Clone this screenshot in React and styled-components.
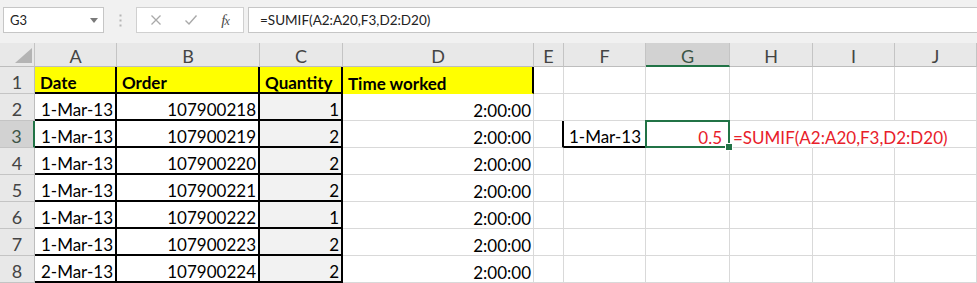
import React from 'react';
import styled, { createGlobalStyle } from 'styled-components';

const GREEN = '#217346';
const GRID = '#d9d9d9';
const HEAD_SEP = '#c4c4c4';
const HEAD_BG = '#e8e8e8';
const HEAD_ACTIVE = '#d2d2d2';
const RED = '#e8202a';
const FONT = 'Lato, "Open Sans", "Liberation Sans", sans-serif';

const Global = createGlobalStyle`
  html, body { margin: 0; padding: 0; background: #fff; }
  body { overflow: hidden; font-family: ${FONT}; }
`;

const Sheet = styled.div`
  width: 977px;
  height: 283px;
  overflow: hidden;
  background: #fff;
  display: flex;
  flex-direction: column;
`;

const FormulaBar = styled.div`
  flex: none;
  height: 43px;
  box-sizing: border-box;
  padding-top: 7px;
  background: #f1f1f1;
  display: flex;
  align-items: flex-start;
`;

const NameBox = styled.div`
  margin-left: 3px;
  width: 101px;
  height: 26px;
  box-sizing: border-box;
  background: #fff;
  border: 1px solid #c6c6c6;
  display: flex;
  align-items: center;
  justify-content: space-between;
  padding: 0 5px 0 6px;
  font-size: 13px;
  color: #222;
`;

const Grip = styled.div`
  width: 32px;
  height: 26px;
  display: flex;
  align-items: center;
  justify-content: center;
`;

const IconBox = styled.div`
  width: 108px;
  height: 26px;
  box-sizing: border-box;
  background: #fff;
  border: 1px solid #d0d0d0;
  display: grid;
  grid-template-columns: 38px 32px 36px;
  justify-items: center;
  align-items: center;
`;

const Fx = styled.span`
  font-family: "Liberation Serif", "DejaVu Serif", serif;
  font-style: italic;
  font-size: 15px;
  color: #4a4a4a;
  letter-spacing: -1px;
  & > small {
    font-size: 12px;
  }
`;

const FormulaInput = styled.div`
  flex: 1;
  margin-left: 4px;
  height: 26px;
  box-sizing: border-box;
  background: #fff;
  border: 1px solid #c6c6c6;
  border-right: none;
  padding-left: 11px;
  font-size: 13.5px;
  line-height: 24px;
  color: #222;
  white-space: nowrap;
`;

const Grid = styled.div`
  display: grid;
  grid-template-columns: 35px 82px 143px 83px 191px 30px 82px 84px 83px 82px 82px;
  grid-template-rows: 24px repeat(8, 27px);
  font-family: ${FONT};
  font-size: 17px;
`;

const Corner = styled.div`
  box-sizing: border-box;
  background: ${HEAD_BG};
  border-right: 1px solid ${HEAD_SEP};
  border-bottom: 1px solid #bdbdbd;
  display: flex;
  align-items: flex-end;
  justify-content: flex-end;
  padding: 0 2px 3px 0;
`;

const ColHead = styled.div`
  box-sizing: border-box;
  background: ${p => (p.$active ? HEAD_ACTIVE : HEAD_BG)};
  border-right: 1px solid ${HEAD_SEP};
  border-bottom: ${p => (p.$active ? `2px solid ${GREEN}` : '1px solid #bdbdbd')};
  color: ${p => (p.$active ? '#3d5546' : '#444')};
  font-size: 18px;
  display: flex;
  align-items: center;
  justify-content: center;
  padding-top: 3px;
`;

const RowHead = styled.div`
  box-sizing: border-box;
  background: ${p => (p.$active ? HEAD_ACTIVE : HEAD_BG)};
  border-right: ${p => (p.$active ? `2px solid ${GREEN}` : '1px solid #bdbdbd')};
  border-bottom: 1px solid ${HEAD_SEP};
  color: ${p => (p.$active ? '#3d5546' : '#444')};
  font-size: 18px;
  display: flex;
  align-items: center;
  justify-content: center;
  padding-top: 4px;
`;

const edge = (kind, filled) => {
  if (kind === 'thick') return '2px solid #000';
  if (kind === 'none' || filled) return '1px solid transparent';
  return `1px solid ${GRID}`;
};

const Cell = styled.div`
  box-sizing: border-box;
  position: relative;
  z-index: ${p => p.$z || 'auto'};
  display: flex;
  align-items: flex-end;
  justify-content: ${p => (p.$align === 'right' ? 'flex-end' : 'flex-start')};
  padding: 0 ${p => p.$pr ?? 2}px 0 ${p => p.$pl ?? 5}px;
  border-right: ${p => edge(p.$right, !!p.$bg)};
  border-bottom: ${p => edge(p.$bottom, !!p.$bg)};
  background: ${p => p.$bg || 'transparent'};
  color: ${p => p.$color || '#000'};
  font-weight: ${p => (p.$bold ? 700 : 400)};
  line-height: 18px;
  white-space: nowrap;
`;

const Selection = styled.div`
  position: absolute;
  top: -1px;
  left: -1px;
  right: -1px;
  bottom: -1px;
  border: 2px solid ${GREEN};
  pointer-events: none;
`;

const FillHandle = styled.div`
  position: absolute;
  right: -5px;
  bottom: -5px;
  width: 6px;
  height: 6px;
  background: ${GREEN};
  border: 1px solid #fff;
`;

const COLS = ['A', 'B', 'C', 'D', 'E', 'F', 'G', 'H', 'I', 'J'];
const YELLOW = '#ffff00';
const QTY_BG = '#f2f2f2';

const tableRows = [
  ['1-Mar-13', '107900218', '1'],
  ['1-Mar-13', '107900219', '2'],
  ['1-Mar-13', '107900220', '2'],
  ['1-Mar-13', '107900221', '2'],
  ['1-Mar-13', '107900222', '1'],
  ['1-Mar-13', '107900223', '2'],
  ['2-Mar-13', '107900224', '2'],
];

function buildRow(r) {
  const cells = COLS.map(() => ({ text: '' }));
  if (r === 1) {
    ['Date', 'Order', 'Quantity'].forEach((t, i) => {
      cells[i] = { text: t, bold: true, bg: YELLOW, right: 'thick', bottom: 'thick' };
    });
    cells[3] = { text: 'Time worked', bold: true, bg: YELLOW, right: 'thick' };
    return cells;
  }
  const [date, order, qty] = tableRows[r - 2];
  cells[0] = { text: date, align: 'right', right: 'thick', bottom: 'thick' };
  cells[1] = { text: order, align: 'right', right: 'thick', bottom: 'thick' };
  cells[2] = { text: qty, align: 'right', right: 'thick', bottom: 'thick', bg: QTY_BG };
  cells[3] = { text: '2:00:00', align: 'right' };
  if (r === 3) {
    cells[4] = { text: '', right: 'thick' };
    cells[5] = { text: '1-Mar-13', align: 'right', bottom: 'thick', pr: 4 };
    cells[6] = { text: '0.5', align: 'right', color: RED, selected: true, pr: 7 };
    cells[7] = { text: '=SUMIF(A2:A20,F3,D2:D20)', color: RED, right: 'none', pl: 3, z: 1 };
    cells[8] = { text: '', right: 'none' };
  }
  return cells;
}

const CloseIcon = () => (
  <svg width="12" height="12" viewBox="0 0 12 12">
    <path d="M1.5 1.5 L10.5 10.5 M10.5 1.5 L1.5 10.5" stroke="#a9a9a9" strokeWidth="1.3" fill="none" />
  </svg>
);

const CheckIcon = () => (
  <svg width="14" height="12" viewBox="0 0 14 12">
    <path d="M1.5 6.5 L5 10 L12.5 1.5" stroke="#a9a9a9" strokeWidth="1.4" fill="none" />
  </svg>
);

export default function App() {
  return (
    <>
      <Global />
      <Sheet>
        <FormulaBar>
          <NameBox>
            <span>G3</span>
            <svg width="8" height="5" viewBox="0 0 8 5">
              <path d="M0 0 H8 L4 5 Z" fill="#7a7a7a" />
            </svg>
          </NameBox>
          <Grip>
            <svg width="3" height="13" viewBox="0 0 3 13">
              <rect x="0.5" y="0.5" width="2" height="2" fill="#b5b5b5" />
              <rect x="0.5" y="5.5" width="2" height="2" fill="#b5b5b5" />
              <rect x="0.5" y="10.5" width="2" height="2" fill="#b5b5b5" />
            </svg>
          </Grip>
          <IconBox>
            <CloseIcon />
            <CheckIcon />
            <Fx>
              f<small>x</small>
            </Fx>
          </IconBox>
          <FormulaInput>=SUMIF(A2:A20,F3,D2:D20)</FormulaInput>
        </FormulaBar>
        <Grid>
          <Corner>
            <svg width="17" height="15" viewBox="0 0 17 15">
              <path d="M17 0 V15 H0 Z" fill="#b4b4b4" />
            </svg>
          </Corner>
          {COLS.map(c => (
            <ColHead key={c} $active={c === 'G'}>
              {c}
            </ColHead>
          ))}
          {[1, 2, 3, 4, 5, 6, 7, 8].map(r => (
            <React.Fragment key={r}>
              <RowHead $active={r === 3}>{r}</RowHead>
              {buildRow(r).map((cell, i) => (
                <Cell
                  key={COLS[i]}
                  $align={cell.align}
                  $bold={cell.bold}
                  $bg={cell.bg}
                  $color={cell.color}
                  $right={cell.right}
                  $bottom={cell.bottom}
                  $pr={cell.pr}
                  $pl={cell.pl}
                  $z={cell.selected ? 2 : cell.z}
                >
                  {cell.text}
                  {cell.selected && (
                    <Selection>
                      <FillHandle />
                    </Selection>
                  )}
                </Cell>
              ))}
            </React.Fragment>
          ))}
        </Grid>
      </Sheet>
    </>
  );
}
